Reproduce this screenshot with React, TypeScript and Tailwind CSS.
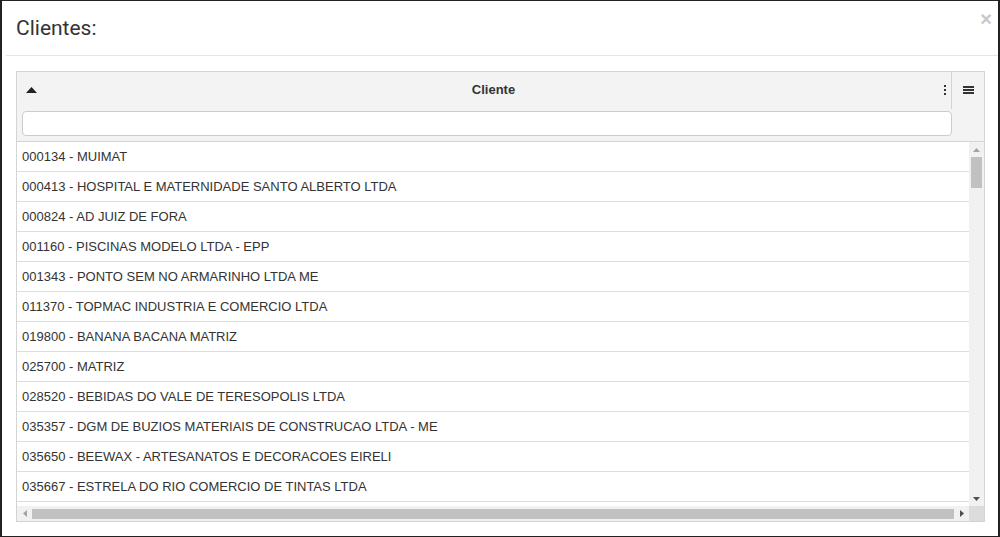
import React from "react";

const clientes = [
  "000134 - MUIMAT",
  "000413 - HOSPITAL E MATERNIDADE SANTO ALBERTO LTDA",
  "000824 - AD JUIZ DE FORA",
  "001160 - PISCINAS MODELO LTDA - EPP",
  "001343 - PONTO SEM NO ARMARINHO LTDA ME",
  "011370 - TOPMAC INDUSTRIA E COMERCIO LTDA",
  "019800 - BANANA BACANA MATRIZ",
  "025700 - MATRIZ",
  "028520 - BEBIDAS DO VALE DE TERESOPOLIS LTDA",
  "035357 - DGM DE BUZIOS MATERIAIS DE CONSTRUCAO LTDA - ME",
  "035650 - BEEWAX - ARTESANATOS E DECORACOES EIRELI",
  "035667 - ESTRELA DO RIO COMERCIO DE TINTAS LTDA",
  "",
];

function Tri({ dir, color, size = 7 }: { dir: "up" | "down" | "left" | "right"; color: string; size?: number }) {
  const half = size / 2;
  const depth = Math.ceil(size / 2);
  const vertical = dir === "up" || dir === "down";
  const w = vertical ? size : depth;
  const h = vertical ? depth : size;
  const pts =
    dir === "up"
      ? `0,${depth} ${half},0 ${size},${depth}`
      : dir === "down"
      ? `0,0 ${size},0 ${half},${depth}`
      : dir === "left"
      ? `${depth},0 ${depth},${size} 0,${half}`
      : `0,0 0,${size} ${depth},${half}`;
  return (
    <svg width={w} height={h} viewBox={`0 0 ${w} ${h}`}>
      <polygon points={pts} fill={color} />
    </svg>
  );
}

export default function App() {
  return (
    <div
      className="w-[1000px] h-[537px] bg-white border border-x-2 border-[#222] flex flex-col text-[#333]"
      style={{ fontFamily: "'Liberation Sans', Arial, sans-serif" }}
    >
      <div className="ml-[4px] h-[55px] shrink-0 border-b border-[#e5e5e5] flex items-center justify-between pl-[10px] pr-[6px]">
        <h4
          className="text-[21px] leading-none text-[#333] mt-[1px]"
          style={{ fontFamily: "Roboto, 'Liberation Sans', sans-serif" }}
        >
          Clientes:
        </h4>
        <span className="self-start mt-[8px] text-[20px] font-bold leading-none text-[#c8c8c8]">
          ×
        </span>
      </div>

      <div className="mt-[15px] ml-[14px] mr-[13px] border border-[#d4d4d4] flex flex-col text-[13px]">
        <div className="bg-[#f3f3f3] border-b border-[#d4d4d4] flex">
          <div className="flex-1 flex flex-col">
            <div className="h-[37px] flex items-center border-r border-[#d4d4d4]">
              <span className="ml-[9px] mt-[-1px] flex">
                <Tri dir="up" color="#222" size={11} />
              </span>
              <span className="flex-1 text-center font-bold pl-[6px] mt-[-2px]">Cliente</span>
              <span className="flex flex-col gap-[2px] mr-[5px] mt-[-2px]">
                <span className="w-[2px] h-[2px] bg-[#333]" />
                <span className="w-[2px] h-[2px] bg-[#333]" />
                <span className="w-[2px] h-[2px] bg-[#333]" />
              </span>
            </div>
            <div className="pl-[5px] pt-[2px] pb-[5px]">
              <div className="h-[25px] bg-white border border-[#ccc] rounded-[4px]" />
            </div>
          </div>
          <div className="w-[32px] h-[37px] flex items-center justify-center pl-[1px]">
            <span className="flex flex-col gap-[1px] mt-[-2px]">
              <span className="w-[11px] h-[2px] bg-[#333]" />
              <span className="w-[11px] h-[2px] bg-[#333]" />
              <span className="w-[11px] h-[2px] bg-[#333]" />
            </span>
          </div>
        </div>

        <div className="flex h-[364px]">
          <div className="flex-1 overflow-hidden">
            {clientes.map((c, i) => (
              <div
                key={i}
                className="h-[30px] border-b border-[#dedede] flex items-center pl-[5px] whitespace-nowrap"
              >
                {c}
              </div>
            ))}
          </div>
          <div className="w-[15px] bg-[#f1f1f1] flex flex-col items-center">
            <div className="h-[15px] flex items-center justify-center">
              <Tri dir="up" color="#a3a3a3" />
            </div>
            <div className="w-[11px] h-[31px] bg-[#c1c1c1]" />
            <div className="flex-1" />
            <div className="h-[15px] flex items-center justify-center">
              <Tri dir="down" color="#505050" />
            </div>
          </div>
        </div>

        <div className="flex h-[15px]">
          <div className="flex-1 bg-[#f1f1f1] flex items-center">
            <div className="w-[15px] flex justify-center">
              <Tri dir="left" color="#a3a3a3" />
            </div>
            <div className="flex-1 h-[10px] bg-[#c1c1c1]" />
            <div className="w-[15px] flex justify-center">
              <Tri dir="right" color="#505050" />
            </div>
          </div>
          <div className="w-[15px] bg-[#dcdcdc]" />
        </div>
      </div>
    </div>
  );
}
